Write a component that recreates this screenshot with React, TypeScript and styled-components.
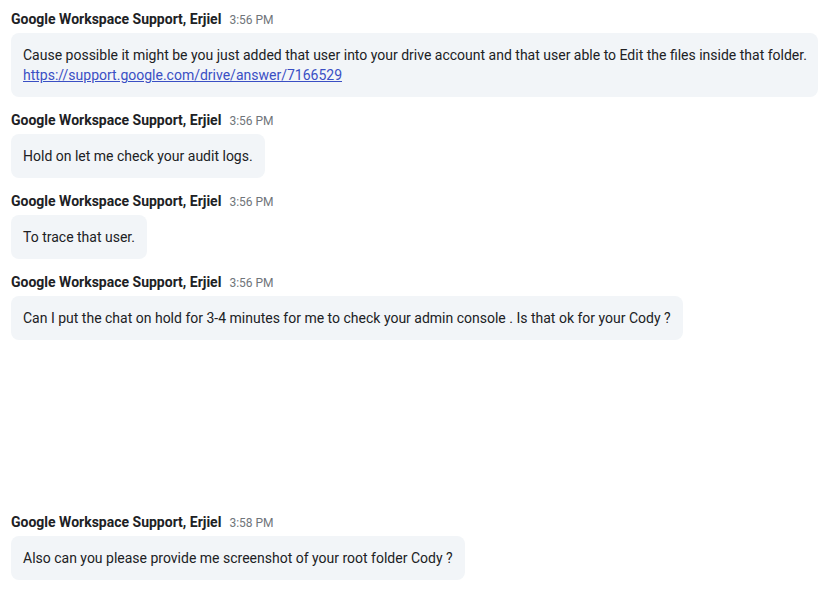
import React from 'react'
import { createGlobalStyle, styled } from 'styled-components'

const GlobalStyle = createGlobalStyle`
  body {
    margin: 0;
    background: #ffffff;
    font-family: Roboto, "Liberation Sans", Arial, sans-serif;
    color: #202124;
  }
`

const Thread = styled.div`
  display: flex;
  flex-direction: column;
  gap: 12px;
  padding: 8px 14px 0 11px;
`

const Block = styled.div`
  display: flex;
  flex-direction: column;
  align-items: flex-start;
  gap: 3px;
`

const Header = styled.div`
  display: flex;
  align-items: baseline;
  gap: 8px;
  height: 22px;
  line-height: 22px;
`

const Sender = styled.span`
  font-size: 14px;
  font-weight: 700;
  color: #202124;
`

const Time = styled.span`
  font-size: 12px;
  color: #70757a;
`

const Bubble = styled.div`
  max-width: 100%;
  box-sizing: border-box;
  padding: 12px;
  border-radius: 8px;
  background: #f2f5f8;
  font-size: 14px;
  line-height: 20px;
  color: #202124;
`

const Line = styled.span`
  white-space: nowrap;
`

const Link = styled.a`
  color: #3a4fc4;
  text-decoration: underline;
`

const Gap = styled.div<{ $height: number }>`
  height: ${(p) => p.$height}px;
`

type Message = {
  time: string
  body: React.ReactNode
}

const SENDER = 'Google Workspace Support, Erjiel'

const messages: Message[] = [
  {
    time: '3:56 PM',
    body: (
      <>
        <Line>
          Cause possible it might be you just added that user into your drive account and that user able to Edit the
          files inside that folder.
        </Line>
        <br />
        <Link href="#">https://support.google.com/drive/answer/7166529</Link>
      </>
    ),
  },
  { time: '3:56 PM', body: 'Hold on let me check your audit logs.' },
  { time: '3:56 PM', body: 'To trace that user.' },
  {
    time: '3:56 PM',
    body: 'Can I put the chat on hold for 3-4 minutes for me to check your admin console . Is that ok for your Cody ?',
  },
]

function ChatMessage({ time, body }: Message) {
  return (
    <Block>
      <Header>
        <Sender>{SENDER}</Sender>
        <Time>{time}</Time>
      </Header>
      <Bubble>{body}</Bubble>
    </Block>
  )
}

export default function App() {
  return (
    <>
      <GlobalStyle />
      <Thread>
        {messages.map((m, i) => (
          <ChatMessage key={i} {...m} />
        ))}
        <Gap $height={147} />
        <ChatMessage time="3:58 PM" body="Also can you please provide me screenshot of your root folder Cody ?" />
      </Thread>
    </>
  )
}
